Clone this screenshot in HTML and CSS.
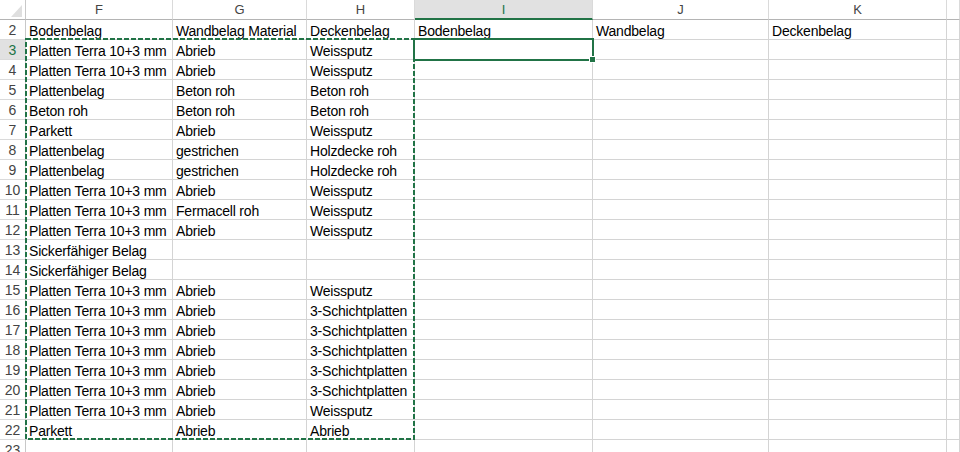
FILE: index.html
```html
<!DOCTYPE html>
<html lang="de">

<head>
    <meta charset="UTF-8">
    <meta name="viewport" content="width=device-width, initial-scale=1.0">
    <title>Belag Tabelle</title>
    <link rel="stylesheet" href="styles.css">
</head>

<body>
    <!-- Sheet grid, filled by the script below -->
    <div id="sheet" class="sheet">
        <!-- copy marquee around F3:H22 -->
        <svg class="marquee" width="960" height="460">
            <rect x="26" y="39" width="388" height="400" fill="none" stroke="#217346" stroke-width="2" stroke-dasharray="5 2"></rect>
        </svg>
        <!-- active cell I3 -->
        <div class="selection"></div>
        <div class="fill-handle"></div>
    </div>

    <script>
        const columns = ["F", "G", "H", "I", "J", "K", ""];

        const rows = {
            2: ["Bodenbelag", "Wandbelag Material", "Deckenbelag", "Bodenbelag", "Wandbelag", "Deckenbelag"],
            3: ["Platten Terra 10+3 mm", "Abrieb", "Weissputz"],
            4: ["Platten Terra 10+3 mm", "Abrieb", "Weissputz"],
            5: ["Plattenbelag", "Beton roh", "Beton roh"],
            6: ["Beton roh", "Beton roh", "Beton roh"],
            7: ["Parkett", "Abrieb", "Weissputz"],
            8: ["Plattenbelag", "gestrichen", "Holzdecke roh"],
            9: ["Plattenbelag", "gestrichen", "Holzdecke roh"],
            10: ["Platten Terra 10+3 mm", "Abrieb", "Weissputz"],
            11: ["Platten Terra 10+3 mm", "Fermacell roh", "Weissputz"],
            12: ["Platten Terra 10+3 mm", "Abrieb", "Weissputz"],
            13: ["Sickerfähiger Belag"],
            14: ["Sickerfähiger Belag"],
            15: ["Platten Terra 10+3 mm", "Abrieb", "Weissputz"],
            16: ["Platten Terra 10+3 mm", "Abrieb", "3-Schichtplatten"],
            17: ["Platten Terra 10+3 mm", "Abrieb", "3-Schichtplatten"],
            18: ["Platten Terra 10+3 mm", "Abrieb", "3-Schichtplatten"],
            19: ["Platten Terra 10+3 mm", "Abrieb", "3-Schichtplatten"],
            20: ["Platten Terra 10+3 mm", "Abrieb", "3-Schichtplatten"],
            21: ["Platten Terra 10+3 mm", "Abrieb", "Weissputz"],
            22: ["Parkett", "Abrieb", "Abrieb"],
            23: []
        };

        function makeCell(className, text) {
            const cell = document.createElement("div");
            cell.className = className;
            cell.textContent = text || "";
            return cell;
        }

        const sheet = document.getElementById("sheet");
        const first = sheet.firstElementChild;

        // corner + column headers
        const corner = makeCell("corner");
        corner.innerHTML = '<svg width="12" height="12" class="corner-mark"><polygon points="11,0 11,12 0,12" fill="#dfdfdf"></polygon></svg>';
        sheet.insertBefore(corner, first);
        columns.forEach(col => {
            const head = makeCell(col === "I" ? "col-head active" : "col-head", col);
            sheet.insertBefore(head, first);
        });

        // data rows
        Object.keys(rows).forEach(num => {
            const head = makeCell(num === "3" ? "row-head active" : "row-head", num);
            sheet.insertBefore(head, first);
            for (let i = 0; i < columns.length; i++) {
                sheet.insertBefore(makeCell("cell", rows[num][i]), first);
            }
        });
    </script>
</body>

</html>
```

FILE: styles.css
```css
body {
    margin: 0;
    padding: 0;
    background: #ffffff;
    font-family: "Liberation Sans", Arial, sans-serif;
    overflow: hidden;
}

.sheet {
    position: relative;
    display: grid;
    grid-template-columns: 26px 147px 134px 108px 178px 176px 178px 1fr;
    grid-auto-rows: 20px;
    width: 960px;
}

.corner,
.col-head,
.row-head,
.cell {
    box-sizing: border-box;
    border-right: 1px solid #d4d4d4;
    border-bottom: 1px solid #d4d4d4;
    white-space: nowrap;
    overflow: visible;
}

.corner {
    position: relative;
    border-bottom-color: #b4b4b4;
    border-right-color: #c8c8c8;
}

.corner-mark {
    position: absolute;
    right: 2px;
    bottom: 2px;
}

.col-head {
    color: #444444;
    font-size: 13px;
    text-align: center;
    line-height: 20px;
    border-bottom-color: #b4b4b4;
    border-right-color: #dadada;
}

.col-head.active {
    background: #e1e1e1;
    color: #217346;
    border-bottom: 2px solid #217346;
}

.row-head {
    color: #444444;
    font-size: 14px;
    text-align: center;
    line-height: 20px;
    border-right-color: #c8c8c8;
    border-bottom-color: #dadada;
}

.row-head.active {
    background: #e1e1e1;
    color: #217346;
}

.cell {
    color: #000000;
    font-size: 14px;
    letter-spacing: -0.2px;
    line-height: 20px;
    padding-left: 3px;
    padding-top: 1px;
}

.marquee {
    position: absolute;
    left: 0;
    top: 0;
    pointer-events: none;
}

.selection {
    position: absolute;
    left: 413px;
    top: 38px;
    width: 181px;
    height: 23px;
    box-sizing: border-box;
    border: 2px solid #217346;
}

.fill-handle {
    position: absolute;
    left: 589px;
    top: 56px;
    width: 5px;
    height: 5px;
    background: #217346;
    border: 1px solid #ffffff;
}
```
